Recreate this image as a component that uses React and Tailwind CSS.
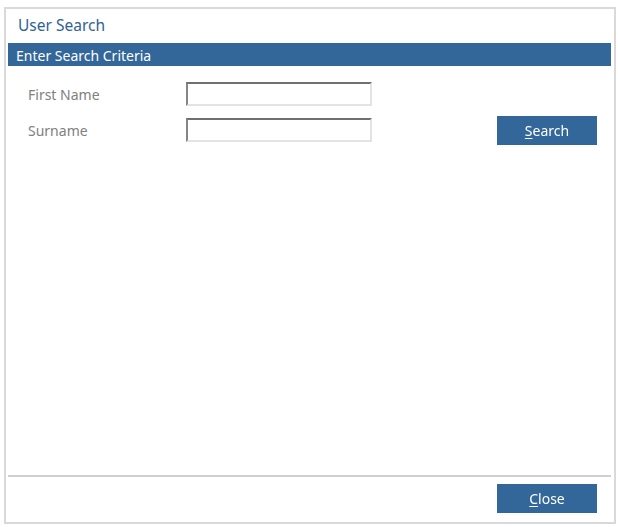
import React from 'react'

const font = { fontFamily: '"Noto Sans", "Open Sans", sans-serif' }

function Field({ label, autoFocus }) {
  return (
    <div className="flex items-center h-[24px]">
      <label className="w-[158px] text-[14px] text-[#808080]">{label}</label>
      <input
        autoFocus={autoFocus}
        className="w-[186px] h-[24px] border-2 border-t-[#707070] border-l-[#858585] border-b-[#e3e3e3] border-r-[#e3e3e3] bg-white outline-none px-1 text-[13px]"
      />
    </div>
  )
}

export default function App() {
  return (
    <div className="w-[618px] h-[527px] bg-white pt-[7px] pl-[4px]" style={font}>
      <div className="w-[612px] h-[517px] border-2 border-[#d9d9d9] flex flex-col px-[2px]">
        {/* Header */}
        <div className="h-[34px] flex items-center pl-[10px] text-[15.5px] text-[#2f6296]">User Search</div>
        <div className="h-[23px] mr-[1px] bg-[#336699] text-white text-[14px] flex items-center pl-[8px] pt-[1px]">
          Enter Search Criteria
        </div>

        {/* Criteria */}
        <div className="flex flex-1 pt-[16px] pl-[20px] pr-[15px]">
          <div className="flex flex-col gap-[12px]">
            <Field label="First Name" autoFocus />
            <Field label="Surname" />
          </div>
          <div className="flex-1 flex justify-end items-start pt-[34px]">
            <button className="w-[100px] h-[29px] bg-[#336699] text-white text-[14px]">
              <span className="underline underline-offset-2">S</span>earch
            </button>
          </div>
        </div>

        {/* Footer */}
        <div className="border-t-2 border-[#d0d0d0] mr-[1px] h-[47px] flex justify-end items-start pt-[7px] pr-[14px]">
          <button className="w-[100px] h-[29px] bg-[#336699] text-white text-[14px]">
            <span className="underline underline-offset-2">C</span>lose
          </button>
        </div>
      </div>
    </div>
  )
}
